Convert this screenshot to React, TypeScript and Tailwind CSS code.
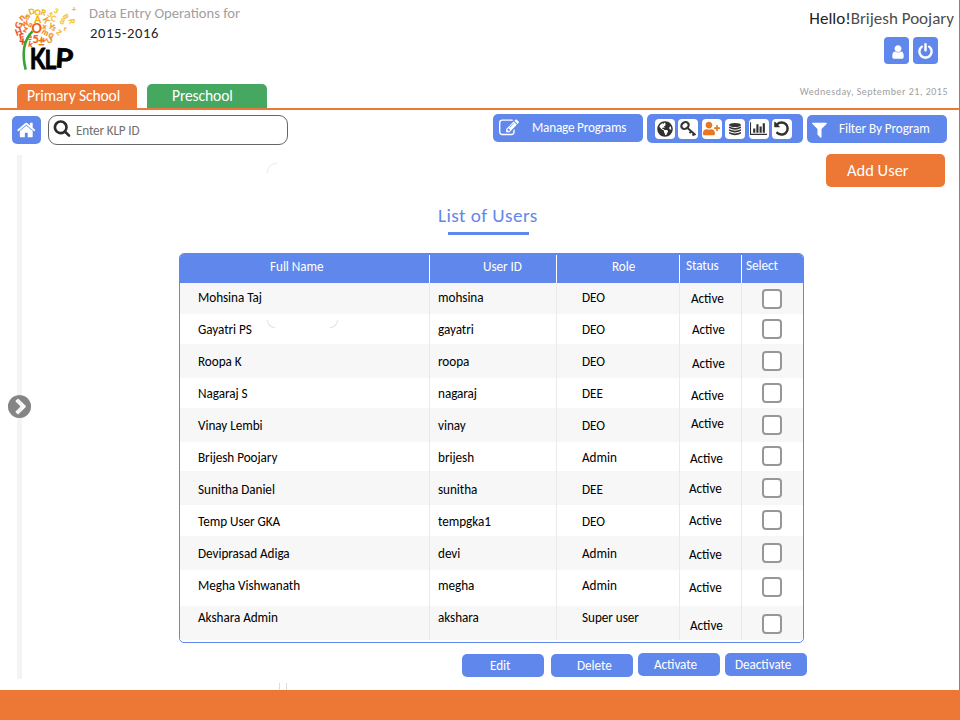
import React from "react";
import { FaGlobeAmericas, FaUserPlus } from "react-icons/fa";

const ICONS = {
  home: "M1408 992v480q0 26-19 45t-45 19h-384v-384h-256v384h-384q-26 0-45-19t-19-45v-480q0-1 .5-3t.5-3l575-474 575 474q1 2 1 6zm223-69l-62 74q-8 9-21 11h-3q-13 0-21-7l-692-577-692 577q-12 8-24 7-13-2-21-11l-62-74q-8-10-7-23.5t11-21.5l719-599q32-26 76-26t76 26l244 204v-195q0-14 9-23t23-9h192q14 0 23 9t9 23v408l219 182q10 8 11 21.5t-7 23.5z",
  user: "M1536 1399q0 109-62.5 187t-150.5 78h-854q-88 0-150.5-78t-62.5-187q0-85 8.500-160.500t31.500-152 58.500-131 94-89 134.500-34.500q131 128 313 128t313-128q76 0 134.500 34.500t94 89 58.500 131 31.500 152 8.500 160.500zm-256-887q0 159-112.500 271.500t-271.500 112.500-271.500-112.500-112.500-271.500 112.500-271.500 271.500-112.500 271.500 112.500 112.500 271.500z",
  power: "M1664 896q0 156-61 298t-164 245-245 164-298 61-298-61-245-164-164-245-61-298q0-182 80.500-343t226.500-270q43-32 95.500-25t83.500 50q32 42 24.500 94.500t-49.500 84.500q-98 74-151.500 181t-53.500 228q0 104 40.500 198.500t109.500 163.500 163.500 109.500 198.500 40.500 198.500-40.500 163.500-109.500 109.500-163.500 40.500-198.500q0-121-53.500-228t-151.500-181q-42-32-49.500-84.500t24.500-94.500q31-43 84-50t95 25q146 109 226.500 270t80.500 343zm-640-768v640q0 52-38 90t-90 38-90-38-38-90v-640q0-52 38-90t90-38 90 38 38 90z",
  edit: "M888 1184l116-116-152-152-116 116v56h96v96h56zm440-720q-16-16-33 1l-350 350q-17 17-1 33t33-1l350-350q17-17 1-33zm80 594v190q0 119-84.500 203.500t-203.500 84.500h-832q-119 0-203.500-84.500t-84.500-203.500v-832q0-119 84.500-203.500t203.500-84.500h832q63 0 117 25 15 7 18 23 3 17-9 29l-49 49q-14 14-32 8-23-6-45-6h-832q-66 0-113 47t-47 113v832q0 66 47 113t113 47h832q66 0 113-47t47-113v-126q0-13 9-22l64-64q15-15 35-7t20 29zm-96-738l288 288-672 672h-288v-288zm444 132l-92 92-288-288 92-92q28-28 68-28t68 28l152 152q28 28 28 68t-28 68z",
  search: "M1216 832q0-185-131.500-316.500t-316.500-131.500-316.500 131.500-131.500 316.500 131.500 316.500 316.500 131.500 316.500-131.500 131.500-316.500zm512 832q0 52-38 90t-90 38q-54 0-90-38l-343-342q-179 124-399 124-143 0-273.500-55.500t-225-150-150-225-55.500-273.500 55.500-273.500 150-225 225-150 273.500-55.500 273.500 55.500 225 150 150 225 55.500 273.500q0 220-124 399l343 343q37 37 37 90z",
  filter: "M1595 295q17 41-14 70l-493 493v742q0 42-39 59-13 5-25 5-27 0-45-19l-256-256q-19-19-19-45v-486l-493-493q-31-29-14-70 17-39 59-39h1280q42 0 59 39z",
  chart: "M640 896v512h-256v-512h256zm384-512v1024h-256v-1024h256zm1024 1152v128h-2048v-1536h128v1408h1920zm-640-896v768h-256v-768h256zm384-384v1152h-256v-1152h256z",
  chevron: "M845 1395l454-454q19-19 19-45t-19-45l-454-454q-19-19-45-19t-45 19l-102 102q-19 19-19 45t19 45l307 307-307 307q-19 19-19 45t19 45l102 102q19 19 45 19t45-19zm819-499q0 209-103 385.500t-279.500 279.500-385.500 103-385.500-103-279.500-279.500-103-385.500 103-385.500 279.500-279.500 385.500-103 385.500 103 279.500 279.500 103 385.500z",
  undo: "M1664 896q0 156-61 298t-164 245-245 164-298 61q-172 0-327-72.500t-264-204.500q-7-10-6.500-22.500t8.500-20.500l137-138q10-9 25-9 16 2 23 12 73 95 179 147t225 52q104 0 198.500-40.500t163.500-109.500 109.500-163.500 40.500-198.500-40.500-198.500-109.500-163.500-163.500-109.500-198.500-40.500q-98 0-188 35.500t-160 101.500l137 138q31 30 14 69-17 40-59 40h-448q-26 0-45-19t-19-45v-448q0-42 40-59 39-17 69 14l130 129q107-101 244.500-156.500t284.500-55.500q156 0 298 61t245 164 164 245 61 298z",
};

function Icon({ name, className, wide = false }: { name: keyof typeof ICONS; className?: string; wide?: boolean }) {
  return (
    <svg viewBox={wide ? "0 0 2048 1792" : "0 0 1792 1792"} className={className} fill="currentColor">
      <path d={ICONS[name]} />
    </svg>
  );
}

// Letters and signs that form the flower head: [glyph, x, y, size, rotation, colour]
const PETALS: [string, number, number, number, number, string][] = [
  ["D", 28, 13, 8, -15, "#f0b000"], ["O", 34, 14, 8, 10, "#f2b600"], ["R", 40, 14, 8, 15, "#eeb41a"],
  ["3", 53, 12, 7, 30, "#f5cf20"], ["+", 71, 11, 8, 0, "#f5b820"], ["5", 47, 16, 7, 50, "#f4b52a"],
  ["n", 18, 19, 9, -40, "#ee7a1c"], ["e", 24, 18, 9, 20, "#f09020"], ["A", 34, 22, 10, 0, "#f5a800"],
  ["K", 43, 22, 8, 60, "#f0a020"], ["C", 50, 20, 8, 20, "#f5c030"], ["8", 59, 23, 8, 20, "#f5c820"],
  ["R", 69, 23, 8, 80, "#f5c820"], ["G", 15, 27, 9, -70, "#ea5a1c"], ["w", 21, 25, 9, -30, "#ee7a1c"],
  ["a", 27, 26, 8, 30, "#ef8a20"], ["Y", 48, 28, 8, 30, "#f29a20"], ["x", 41, 28, 8, 10, "#f29020"],
  ["B", 63, 18, 7, 60, "#f5c030"], ["O", 33, 32, 13, 0, "#ee5a14"], ["H", 15, 34, 9, -20, "#ea5020"],
  ["z", 22, 31, 9, 20, "#ee6a20"], ["m", 42, 34, 8, 30, "#f08a20"], ["q", 48, 37, 9, 30, "#ef9020"],
  ["Z", 56, 34, 7, 40, "#f5b030"], ["r", 62, 30, 7, 10, "#f5a530"], ["F", 18, 39, 9, -10, "#e84820"],
  ["+", 19, 45, 13, 5, "#e84020"], ["5", 32, 42, 11, 0, "#ee6414"], ["w", 40, 41, 8, 30, "#ee8020"],
  ["±", 38, 45, 11, 0, "#ee7414"], ["U", 46, 42, 8, -30, "#f0902c"], ["k", 27, 46, 8, 10, "#ea5520"],
  ["e", 26, 39, 9, 0, "#ea5a20"], ["s", 51, 30, 8, 40, "#f2a430"],
];

function Logo() {
  return (
    <svg viewBox="0 0 90 80" className="h-20 w-[89px] shrink-0">
      {PETALS.map(([glyph, x, y, size, turn, colour], i) => (
        <text key={i} x={x + 4} y={y + 1} fontSize={size} fill={colour} stroke={colour} strokeWidth="0.2" fontWeight={700} textAnchor="middle"
          fontFamily="Lato, sans-serif" transform={`rotate(${turn} ${x + 4} ${y - 2})`}>{glyph}</text>
      ))}
      <path d="M33 31 C24 40 22 54 26 70" fill="none" stroke="#35a536" strokeWidth="2.6" />
      <g fontFamily="Lato, sans-serif" fontWeight={700} fill="#000" stroke="#000" strokeWidth="0.8" strokeLinejoin="round">
        <text x="30" y="69" fontSize="28" textLength="16" lengthAdjust="spacingAndGlyphs">K</text>
        <text x="45" y="69" fontSize="27" textLength="12" lengthAdjust="spacingAndGlyphs">L</text>
        <text x="56" y="68" fontSize="27" textLength="18" lengthAdjust="spacingAndGlyphs" transform="rotate(4 62 60)">P</text>
      </g>
    </svg>
  );
}

function Key() {
  return (
    <svg viewBox="0 0 18 18" className="size-[18px]" fill="none" stroke="#353535">
      <ellipse cx="6" cy="5.500" rx="3.900" ry="3.200" strokeWidth="2.2" transform="rotate(-35 6 5.500)" />
      <path d="M8.500 8L16.500 15M12.500 11l-2 2.200M15.500 13.300l-2 2.200" strokeWidth="2" />
    </svg>
  );
}

function Database() {
  return (
    <svg viewBox="0 0 14 14" className="size-[14px]" fill="#353535">
      <ellipse cx="7" cy="3" rx="6" ry="2" />
      <path d="M1 4.500q6 2.800 12 0v1.500q-6 3.400-12 0zM1 7.300q6 2.800 12 0v1.500q-6 3.400-12 0zM1 10.100q6 2.800 12 0v1.500q-6 3.400-12 0z" />
    </svg>
  );
}

interface User {
  name: string;
  id: string;
  role: string;
  height: number;
  status: [number, number];
  box: number;
}

// height: band height; status: x and y inset of the status label; box: y inset of the checkbox
const USERS: User[] = [
  { name: "Mohsina Taj", id: "mohsina", role: "DEO", height: 31, status: [11, 8], box: 6 },
  { name: "Gayatri PS", id: "gayatri", role: "DEO", height: 30, status: [12, 8], box: 5 },
  { name: "Roopa K", id: "roopa", role: "DEO", height: 34, status: [12, 12], box: 7 },
  { name: "Nagaraj S", id: "nagaraj", role: "DEE", height: 30, status: [11, 10], box: 5 },
  { name: "Vinay Lembi", id: "vinay", role: "DEO", height: 34, status: [11, 8], box: 7 },
  { name: "Brijesh Poojary", id: "brijesh", role: "Admin", height: 29, status: [10, 9], box: 4 },
  { name: "Sunitha Daniel", id: "sunitha", role: "DEE", height: 34, status: [9, 10], box: 7 },
  { name: "Temp User GKA", id: "tempgka1", role: "DEO", height: 31, status: [9, 8], box: 5 },
  { name: "Deviprasad Adiga", id: "devi", role: "Admin", height: 34, status: [9, 11], box: 7 },
  { name: "Megha Vishwanath", id: "megha", role: "Admin", height: 36, status: [9, 10], box: 7 },
  { name: "Akshara Admin", id: "akshara", role: "Super user", height: 34, status: [10, 12], box: 8 },
];

const COLUMNS = "grid grid-cols-[250px_127px_123px_62px_61px]";

function UserRow({ user, top, index }: { user: User; top: number; index: number }) {
  const inset = 7 + 32 * index - top;
  return (
    <div className={`${COLUMNS} ${index % 2 ? "bg-white" : "bg-[#f7f7f7]"}`} style={{ height: user.height }}>
      <div className="border-r border-[#eaeaea] pl-[18px]" style={{ paddingTop: inset }}>{user.name}</div>
      <div className="border-r border-[#eaeaea] pl-2" style={{ paddingTop: inset }}>{user.id}</div>
      <div className="border-r border-[#eaeaea] pl-[25px]" style={{ paddingTop: inset }}>{user.role}</div>
      <div className="border-r border-[#eaeaea]" style={{ paddingLeft: user.status[0], paddingTop: user.status[1] }}>Active</div>
      <div className="pl-5" style={{ paddingTop: user.box }}>
        <div className="size-5 rounded border-2 border-[#979797] bg-white" />
      </div>
    </div>
  );
}

const TILE = "flex size-5 items-center justify-center rounded-[4px] bg-white text-[#303030]";

export default function App() {
  let top = 0;
  const rows = USERS.map((user, i) => {
    const row = <UserRow key={user.id} user={user} top={top} index={i} />;
    top += user.height;
    return row;
  });

  return (
    <div className="flex h-[720px] w-[960px] flex-col overflow-hidden bg-white font-[Carlito,Calibri,Lato,sans-serif] [font-feature-settings:'liga'] whitespace-nowrap">
      <div className="flex h-[690px] flex-col border-r border-[#6386d8]">
        <header className="flex h-[110px] flex-col border-b-2 border-[#ed7734]">
          <div className="flex h-[84px]">
            <Logo />
            <div className="pt-1 text-[14.6px] leading-[19px]">
              <p className="text-[#a0a0a0]">Data Entry Operations for</p>
              <p className="pl-px leading-[21px] tracking-[0.6px] text-[#262626]">2015-2016</p>
            </div>
            <div className="ml-auto flex flex-col items-end pr-[5px]">
              <p className="pt-2 text-[17px] leading-[22px] text-[#4c4c4c]"><span className="text-[#222]">Hello!</span>Brijesh Poojary</p>
              <div className="flex gap-1 pt-[7px] pr-4 text-white">
                <button className="flex h-[27px] w-[25px] items-center justify-center rounded bg-[#6088ec]"><Icon name="user" className="mt-0.5 ml-0.5 size-4" /></button>
                <button className="flex h-[27px] w-[25px] items-center justify-center rounded bg-[#6088ec]"><Icon name="power" className="mt-px size-[17px]" /></button>
              </div>
            </div>
          </div>
          <div className="flex h-6 gap-2.5 pr-[11px] pl-[17px] text-[15.5px] leading-6 tracking-[-0.1px] text-white">
            <div className="w-[120px] rounded-t-[5px] bg-[#ed7734] pl-2.5">Primary School</div>
            <div className="w-[120px] rounded-t-[5px] bg-[#46a761] pl-[25px]">Preschool</div>
            <p className="ml-auto text-[10px] leading-[15px] tracking-[0.51px] text-[#a0a0a0]">Wednesday, September 21, 2015</p>
          </div>
        </header>

        <nav className="flex h-[45px] items-start pt-1 pl-3 text-[13.2px] tracking-[-0.08px]">
          <button className="mt-0.5 flex h-7 w-[29px] items-center justify-center rounded-[5px] bg-[#6088ec] text-white"><Icon name="home" className="size-5" /></button>
          <div className="mt-px ml-[7px] flex h-[30px] w-60 items-center rounded-[9px] border border-[#666] pl-1 text-[#707070]">
            <Icon name="search" className="-mt-1 size-[18px] text-[#2b2b2b]" />
            <span className="mt-0.5 ml-[5px] tracking-[-0.15px]">Enter KLP ID</span>
          </div>
          <button className="ml-[205px] flex h-7 w-[150px] items-center rounded-[5px] bg-[#6088ec] pl-1.5 text-white">
            <Icon name="edit" className="size-5" />
            <span className="ml-[13px] tracking-[-0.2px]">Manage Programs</span>
          </button>
          <div className="ml-1 flex h-[29px] w-[156px] items-center gap-[3.4px] rounded-[5px] bg-[#6088ec] pl-2">
            <div className={TILE}><FaGlobeAmericas className="size-4" /></div>
            <div className={TILE}><Key /></div>
            <div className={TILE}><FaUserPlus className="size-[17px] text-[#e87722]" /></div>
            <div className={TILE}><Database /></div>
            <div className={TILE}><Icon name="chart" wide className="h-[15px] w-[17px]" /></div>
            <div className={TILE}><Icon name="undo" className="size-[17px]" /></div>
          </div>
          <button className="mt-px ml-1 flex h-7 w-[140px] items-center rounded-[5px] bg-[#6088ec] pl-[3px] text-white">
            <Icon name="filter" className="size-[19px]" />
            <span className="ml-2.5">Filter By Program</span>
          </button>
        </nav>

        <div className="flex h-[535px]">
          <aside className="relative w-[179px]">
            <div className="ml-[17px] h-[524px] w-[5px] bg-[#f4f4f4]" />
            <Icon name="chevron" className="absolute top-[238px] left-[6px] size-[27px] text-[#858585]" />
          </aside>
          <main className="relative flex w-[780px] flex-col">
            <button className="-mt-px mr-[14px] h-[33px] w-[119px] self-end rounded-[5px] bg-[#ed7734] pl-[21px] text-left text-[16.5px] text-white">Add User</button>
            <h1 className="mt-4 ml-[259px] h-[29px] text-[19.2px] leading-[26px] tracking-[0.43px] text-[#6088ec]">List of Users</h1>
            <div className="ml-[269px] h-[3px] w-[81px] bg-[#6088ec]" />
            <section className="mt-[18px] h-[390px] w-[625px] overflow-hidden rounded-[5px] border border-[#6088ec] text-[13.2px] leading-4 tracking-[-0.05px] text-black">
              <div className={`${COLUMNS} h-[29px] bg-[#6088ec] pt-px text-white`}>
                <div className="h-7 border-r border-white pt-1 pl-[90px]">Full Name</div>
                <div className="h-7 border-r border-white pt-1 pl-[53px]">User ID</div>
                <div className="h-7 border-r border-white pt-1 pl-[55px]">Role</div>
                <div className="h-7 border-r border-white pt-[3px] pl-1.5">Status</div>
                <div className="pt-[3px] pl-1">Select</div>
              </div>
              {rows}
            </section>
            <div className="flex pt-[10px] pl-[283px] text-[13.2px] leading-[23px] tracking-[-0.05px] text-white">
              <button className="mt-px h-[23px] w-[82px] rounded-[5px] bg-[#6088ec] pl-7 text-left">Edit</button>
              <button className="mt-px ml-[7px] h-[23px] w-[82px] rounded-[5px] bg-[#6088ec] pl-[26px] text-left">Delete</button>
              <button className="ml-[5px] h-[23px] w-[82px] rounded-[5px] bg-[#6088ec] pl-4 text-left">Activate</button>
              <button className="ml-[5px] h-[23px] w-[82px] rounded-[5px] bg-[#6088ec] pl-2.5 text-left">Deactivate</button>
            </div>
            <div className="absolute top-2 left-[88px] size-2.5 rounded-tl-[9px] border-t border-l border-[#eaeaf2]" />
            <div className="absolute top-[165px] left-[88px] size-2 rounded-bl-[8px] border-b border-l border-[#dde0ec]" />
            <div className="absolute top-[165px] left-[151px] size-2 rounded-br-[8px] border-r border-b border-[#dde0ec]" />
            <div className="absolute top-[528px] left-[100px] h-[7px] w-2 border-x border-[#dcdcdc]" />
          </main>
        </div>
      </div>
      <footer className="h-[30px] bg-[#ed7734]" />
    </div>
  );
}
